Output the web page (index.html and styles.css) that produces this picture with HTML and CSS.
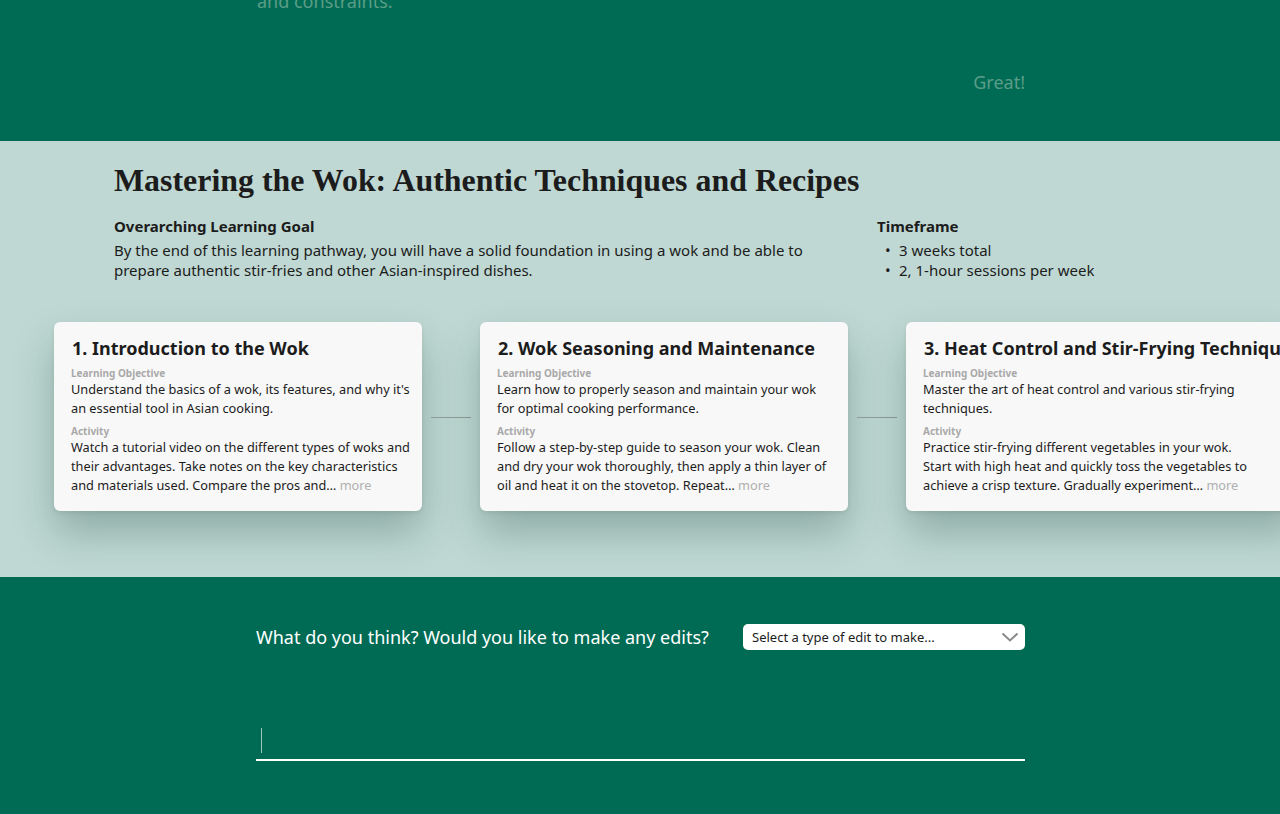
FILE: index.html
```html
<!DOCTYPE html>
<html lang="en">
<head>
<meta charset="utf-8">
<title>Mastering the Wok</title>
<link rel="stylesheet" href="styles.css">
</head>
<body>
<section class="chat-top">
  <div class="column">
    <p class="prev-msg">and constraints.</p>
    <p class="reply">Great!</p>
  </div>
</section>

<section class="pathway">
  <h1 class="path-title">Mastering the Wok: Authentic Techniques and Recipes</h1>
  <div class="overview">
    <div class="goal">
      <h2 class="label">Overarching Learning Goal</h2>
      <p class="text">By the end of this learning pathway, you will have a solid foundation in using a wok and be able to prepare authentic stir-fries and other Asian-inspired dishes.</p>
    </div>
    <div class="timeframe">
      <h2 class="label">Timeframe</h2>
      <ul class="tf-list">
        <li>3 weeks total</li>
        <li>2, 1-hour sessions per week</li>
      </ul>
    </div>
  </div>

  <div class="cards">
    <article class="card">
      <h3 class="card-title">1. Introduction to the Wok</h3>
      <div class="card-label">Learning Objective</div>
      <p class="card-text">Understand the basics of a wok, its features, and why it's an essential tool in Asian cooking.</p>
      <div class="card-label">Activity</div>
      <p class="card-text">Watch a tutorial video on the different types of woks and their advantages. Take notes on the key characteristics and materials used. Compare the pros and… <span class="more">more</span></p>
    </article>
    <div class="connector"></div>
    <article class="card">
      <h3 class="card-title">2. Wok Seasoning and Maintenance</h3>
      <div class="card-label">Learning Objective</div>
      <p class="card-text">Learn how to properly season and maintain your wok for optimal cooking performance.</p>
      <div class="card-label">Activity</div>
      <p class="card-text">Follow a step-by-step guide to season your wok. Clean and dry your wok thoroughly, then apply a thin layer of oil and heat it on the stovetop. Repeat… <span class="more">more</span></p>
    </article>
    <div class="connector"></div>
    <article class="card">
      <h3 class="card-title">3. Heat Control and Stir-Frying Techniques</h3>
      <div class="card-label">Learning Objective</div>
      <p class="card-text">Master the art of heat control and various stir-frying techniques.</p>
      <div class="card-label">Activity</div>
      <p class="card-text">Practice stir-frying different vegetables in your wok. Start with high heat and quickly toss the vegetables to achieve a crisp texture. Gradually experiment… <span class="more">more</span></p>
    </article>
  </div>
</section>

<section class="chat-bottom">
  <div class="column">
    <div class="question-row">
      <p class="question">What do you think? Would you like to make any edits?</p>
      <div class="select">
        <span>Select a type of edit to make...</span>
        <svg class="chevron" width="18" height="10" viewBox="0 0 18 10"><path d="M1.5 1.5 L9 8.5 L16.5 1.5" fill="none" stroke="#8a8a8a" stroke-width="2"/></svg>
      </div>
    </div>
    <div class="input-area">
      <span class="caret"></span>
    </div>
  </div>
</section>
</body>
</html>
```

FILE: styles.css
```css
* { box-sizing: border-box; }
html, body { margin: 0; padding: 0; }
body {
  background: #006b54;
  font-family: "Noto Sans", "Open Sans", sans-serif;
  overflow: hidden;
  width: 1280px;
  height: 814px;
}
p, h1, h2, h3, ul { margin: 0; padding: 0; }

.column {
  width: 769px;
  margin-left: 256px;
}

.chat-top {
  height: 141px;
  background: #006b54;
  overflow: hidden;
}
.prev-msg {
  margin-top: -11px;
  margin-left: 1px;
  font-size: 18px;
  line-height: 24px;
  color: #5b9d87;
}
.reply {
  margin-top: 57px;
  text-align: right;
  font-size: 18px;
  line-height: 24px;
  color: #5b9d87;
}

.pathway {
  background: #bfd8d3;
  height: 436px;
  overflow: hidden;
  padding-top: 20px;
}
.path-title {
  margin-left: 114px;
  font-family: "Liberation Serif", "DejaVu Serif", serif;
  font-weight: 700;
  font-size: 31.9px;
  line-height: 40px;
  color: #1c1c1c;
}
.overview {
  display: flex;
  margin-left: 114px;
  margin-top: 15px;
  gap: 40px;
}
.goal { width: 723px; }
.label {
  font-size: 15px;
  font-weight: 700;
  line-height: 21px;
  margin-bottom: 3px;
  color: #1c1c1c;
}
.text {
  font-size: 15px;
  line-height: 20px;
  color: #1c1c1c;
}
.tf-list {
  list-style: none;
  font-size: 15px;
  line-height: 20px;
  color: #1c1c1c;
}
.tf-list li { position: relative; padding-left: 22px; }
.tf-list li::before {
  content: "•";
  position: absolute;
  left: 8px;
  top: 0;
}

.cards {
  display: flex;
  align-items: center;
  margin-top: 42px;
  margin-left: 54px;
}
.card {
  flex: 0 0 368px;
  height: 189px;
  background: #f8f8f8;
  border-radius: 6px;
  padding: 13px 0 0 17px;
  box-shadow: 0 22px 40px rgba(20, 60, 50, 0.28), 0 2px 4px rgba(0,0,0,0.08);
}
.connector {
  flex: 0 0 40px;
  height: 1px;
  background: #8c9c98;
  margin: 2px 9px 0 9px;
}
.card-title {
  font-size: 18px;
  font-weight: 700;
  line-height: 26px;
  color: #1c1c1c;
  white-space: nowrap;
  margin-left: 1px;
}
.card-label {
  margin-top: 5px;
  font-size: 10px;
  font-weight: 700;
  line-height: 14px;
  color: #a9a9a9;
}
.card-text {
  width: 339.6px;
  font-size: 12.75px;
  line-height: 19px;
  color: #1c1c1c;
}
.card-text + .card-label { margin-top: 6px; }
.more { color: #b0b0b0; }

.chat-bottom {
  height: 237px;
  background: #006b54;
  padding-top: 47px;
}
.question-row {
  display: flex;
  align-items: center;
  justify-content: space-between;
}
.question {
  font-size: 18px;
  line-height: 26px;
  color: #ffffff;
}
.select {
  width: 282px;
  height: 26px;
  background: #ffffff;
  border-radius: 5px;
  display: flex;
  align-items: center;
  justify-content: space-between;
  padding: 0 6px 0 9px;
  font-size: 13px;
  color: #1c1c1c;
}
.input-area {
  margin-top: 74px;
  height: 37px;
  border-bottom: 2px solid #ffffff;
  padding: 4px 0 0 5px;
}
.caret {
  display: block;
  width: 1px;
  height: 25px;
  background: #9fc7bb;
}
```
